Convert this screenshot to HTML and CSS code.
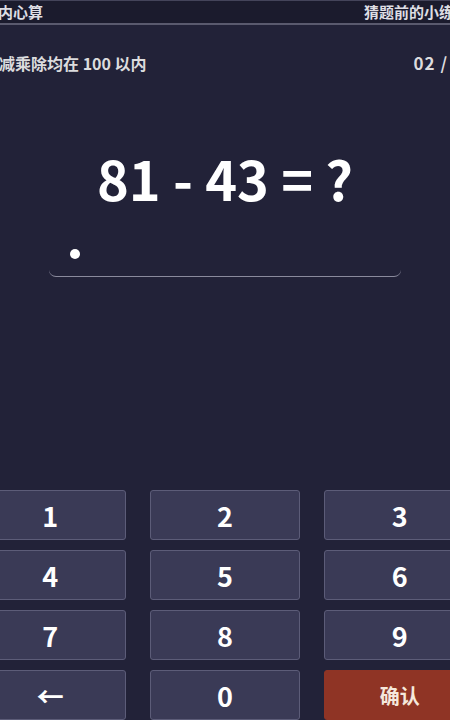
FILE: index.html
```html
<!DOCTYPE html>
<html lang="zh">
<head>
  <meta charset="UTF-8">
  <meta name="viewport" content="width=device-width, initial-scale=1.0">
  <link rel="stylesheet" href="styles.css">
  <title>以内心算</title>
</head>
<body>
  <div class="page">
    <div class="header">
      <span class="title">以内心算</span>
      <span class="title">猜题前的小练习</span>
    </div>

    <div class="info">
      <span>加减乘除均在 100 以内</span>
      <span class="counter">02 / 10</span>
    </div>

    <div class="question">81 - 43 = ?</div>

    <div class="answer">
      <span class="dot"></span>
    </div>

    <div class="keypad">
      <button class="key">1</button>
      <button class="key">2</button>
      <button class="key">3</button>
      <button class="key">4</button>
      <button class="key">5</button>
      <button class="key">6</button>
      <button class="key">7</button>
      <button class="key">8</button>
      <button class="key">9</button>
      <button class="key">&larr;</button>
      <button class="key">0</button>
      <button class="key confirm">确认</button>
    </div>
  </div>
</body>
</html>
```

FILE: styles.css
```css
html, body {
  overflow: hidden;
}

body {
  margin: 0;
  padding: 0;
  background-color: #222238;
  font-family: 'Noto Sans CJK SC', 'Noto Sans', sans-serif;
  color: #fff;
  display: flex;
  justify-content: center;
}

.page {
  flex: 0 0 500px;
  width: 500px;
  display: flex;
  flex-direction: column;
  align-items: center;
}

.header {
  align-self: stretch;
  display: flex;
  justify-content: space-between;
  align-items: center;
  height: 22px;
  padding: 0 6px 0 8px;
  background-color: #1b1b2d;
  border-top: 1px solid #44445a;
  border-bottom: 2px solid #5a5a6e;
  box-sizing: content-box;
}

.title {
  font-size: 15px;
  font-weight: 700;
  line-height: 22px;
  color: #dedee4;
}

.info {
  align-self: stretch;
  display: flex;
  justify-content: space-between;
  align-items: center;
  margin-top: 27px;
  padding: 0 0 0 8px;
  font-size: 16px;
  font-weight: 700;
  line-height: 22px;
  color: #dcdcde;
}

.counter {
  font-size: 17px;
  letter-spacing: 1px;
}

.question {
  margin-top: 72px;
  font-size: 54px;
  font-weight: 700;
  line-height: 64px;
  color: #fff;
}

.answer {
  width: 352px;
  height: 46px;
  margin-top: 20px;
  display: flex;
  align-items: center;
  border-bottom: 1.5px solid #8a8a9c;
  border-radius: 0 0 7px 7px;
}

.dot {
  width: 10px;
  height: 10px;
  margin-left: 21px;
  margin-top: 2px;
  border-radius: 50%;
  background-color: #fff;
}

.keypad {
  align-self: stretch;
  display: grid;
  grid-template-columns: repeat(3, 1fr);
  grid-auto-rows: 50px;
  gap: 10px 24px;
  margin-top: 213px;
}

.key {
  background-color: #3a3a56;
  border: 1px solid #5c5c78;
  border-radius: 3px;
  color: #fff;
  font-family: 'Noto Sans CJK SC', 'Noto Sans', sans-serif;
  font-size: 27px;
  font-weight: 700;
  padding: 0;
  cursor: pointer;
}

.confirm {
  background-color: #8f3425;
  border-color: #8f3425;
  color: #f5e8dc;
  font-size: 20px;
}
```
